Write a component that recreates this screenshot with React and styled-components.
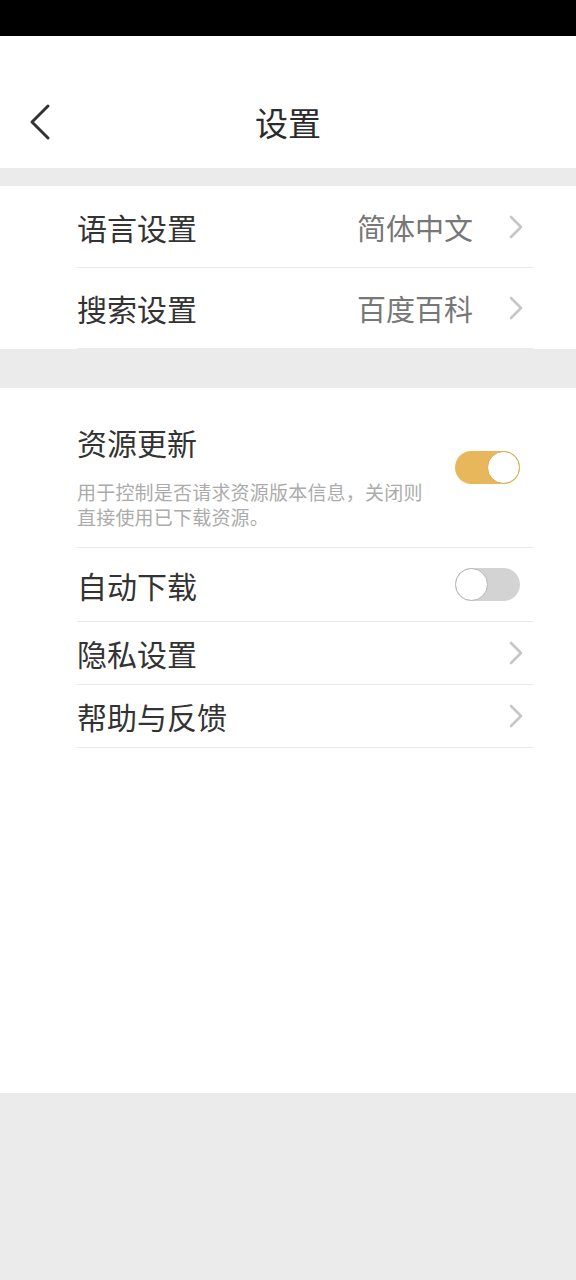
import React from "react";
import styled, { createGlobalStyle } from "styled-components";

const Global = createGlobalStyle`
  html, body { margin: 0; padding: 0; background: #fff; }
  body { font-family: "Noto Sans CJK SC", "Noto Sans", sans-serif; }
  * { box-sizing: border-box; }
`;

const Page = styled.div`
  width: 576px;
  min-height: 1280px;
  display: flex;
  flex-direction: column;
  background: #fff;
`;

const StatusBar = styled.div`
  height: 36px;
  background: #000;
`;

const Header = styled.header`
  height: 132px;
  padding-top: 44px;
  background: #fff;
`;

const NavBar = styled.div`
  position: relative;
  height: 84px;
  display: flex;
  align-items: center;
  justify-content: center;
`;

const BackButton = styled.button`
  position: absolute;
  left: 28px;
  top: 50%;
  transform: translateY(-50%);
  background: none;
  border: 0;
  padding: 0;
  display: flex;
`;

const Title = styled.h1`
  margin: 0;
  font-size: 33px;
  font-weight: 400;
  color: #2b2b2b;
  line-height: 40px;
`;

const Gap = styled.div`
  height: ${(p) => p.$h}px;
  background: #ebebeb;
`;

const Section = styled.section`
  background: #fff;
  padding: 0 43px 0 77px;
  ${(p) => (p.$grow ? "flex: 1;" : "")}
`;

const Row = styled.div`
  height: ${(p) => p.$h}px;
  display: flex;
  align-items: center;
  justify-content: space-between;
  border-bottom: 1px solid #e9e9e9;
  padding-right: ${(p) => (p.$toggle ? 13 : 10)}px;
`;

const TallRow = styled.div`
  height: 160px;
  display: flex;
  align-items: center;
  justify-content: space-between;
  border-bottom: 1px solid #e9e9e9;
  padding-right: 13px;
`;

const Label = styled.span`
  font-size: 30px;
  line-height: 34px;
  color: #333;
`;

const Right = styled.div`
  display: flex;
  align-items: center;
  gap: 36px;
`;

const Value = styled.span`
  font-size: 29px;
  line-height: 34px;
  color: #777;
`;

const TextBlock = styled.div`
  align-self: stretch;
  display: flex;
  flex-direction: column;
  gap: 20px;
  padding-top: 37px;
`;

const Desc = styled.p`
  margin: 0;
  width: 360px;
  font-size: 19px;
  line-height: 25px;
  letter-spacing: 0.2px;
  color: #ababab;
`;

const Track = styled.div`
  position: relative;
  width: 65px;
  height: 33px;
  border-radius: 17px;
  background: ${(p) => (p.$on ? "#e8b75c" : "#d3d3d3")};
  flex-shrink: 0;
`;

const Knob = styled.div`
  position: absolute;
  top: 0;
  ${(p) => (p.$on ? "right: 0;" : "left: 0;")}
  width: 33px;
  height: 33px;
  border-radius: 50%;
  background: #fff;
  border: 1.5px solid ${(p) => (p.$on ? "#d9a84a" : "#b5b5b5")};
`;

const Footer = styled.div`
  height: 187px;
  background: #ebebeb;
`;

const Chevron = () => (
  <svg width="14" height="24" viewBox="0 0 14 24">
    <polyline
      points="2,2 12,12 2,22"
      fill="none"
      stroke="#c6c6c6"
      strokeWidth="2.6"
      strokeLinecap="round"
      strokeLinejoin="round"
    />
  </svg>
);

const BackIcon = () => (
  <svg width="24" height="38" viewBox="0 0 24 38">
    <polyline
      points="20,3 4,19 20,35"
      fill="none"
      stroke="#333"
      strokeWidth="3"
      strokeLinecap="round"
      strokeLinejoin="round"
    />
  </svg>
);

const Toggle = ({ on }) => (
  <Track $on={on}>
    <Knob $on={on} />
  </Track>
);

export default function App() {
  return (
    <>
      <Global />
      <Page>
        <StatusBar />
        <Header>
          <NavBar>
            <BackButton aria-label="返回">
              <BackIcon />
            </BackButton>
            <Title>设置</Title>
          </NavBar>
        </Header>
        <Gap $h={18} />
        <Section>
          <Row $h={82}>
            <Label>语言设置</Label>
            <Right>
              <Value>简体中文</Value>
              <Chevron />
            </Right>
          </Row>
          <Row $h={81}>
            <Label>搜索设置</Label>
            <Right>
              <Value>百度百科</Value>
              <Chevron />
            </Right>
          </Row>
        </Section>
        <Gap $h={39} />
        <Section $grow>
          <TallRow>
            <TextBlock>
              <Label>资源更新</Label>
              <Desc>用于控制是否请求资源版本信息，关闭则直接使用已下载资源。</Desc>
            </TextBlock>
            <Toggle on />
          </TallRow>
          <Row $h={74} $toggle>
            <Label>自动下载</Label>
            <Toggle on={false} />
          </Row>
          <Row $h={63}>
            <Label>隐私设置</Label>
            <Chevron />
          </Row>
          <Row $h={63}>
            <Label>帮助与反馈</Label>
            <Chevron />
          </Row>
        </Section>
        <Footer />
      </Page>
    </>
  );
}
